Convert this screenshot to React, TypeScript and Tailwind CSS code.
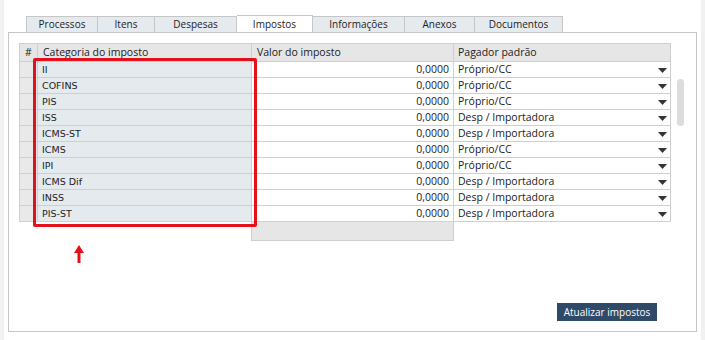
import React from 'react';

type Row = { categoria: string; valor: string; pagador: string };

const TABS = ['Processos', 'Itens', 'Despesas', 'Impostos', 'Informações', 'Anexos', 'Documentos'];
const TAB_WIDTHS = ['w-[72px]', 'w-[57px]', 'w-[82px]', 'w-[76px]', 'w-[92px]', 'w-[70px]', 'w-[88px]'];

const ROWS: Row[] = [
  { categoria: 'II', valor: '0,0000', pagador: 'Próprio/CC' },
  { categoria: 'COFINS', valor: '0,0000', pagador: 'Próprio/CC' },
  { categoria: 'PIS', valor: '0,0000', pagador: 'Próprio/CC' },
  { categoria: 'ISS', valor: '0,0000', pagador: 'Desp / Importadora' },
  { categoria: 'ICMS-ST', valor: '0,0000', pagador: 'Desp / Importadora' },
  { categoria: 'ICMS', valor: '0,0000', pagador: 'Próprio/CC' },
  { categoria: 'IPI', valor: '0,0000', pagador: 'Próprio/CC' },
  { categoria: 'ICMS Dif', valor: '0,0000', pagador: 'Desp / Importadora' },
  { categoria: 'INSS', valor: '0,0000', pagador: 'Desp / Importadora' },
  { categoria: 'PIS-ST', valor: '0,0000', pagador: 'Desp / Importadora' },
];

const ui = "font-['Open_Sans',sans-serif]";

export default function App() {
  return (
    <div className={`w-[705px] h-[340px] bg-white flex text-[#222] ${ui}`}>
      <div className="w-[4px] bg-[#f1f1f1]" />
      <div className="flex-1 pt-[16px] px-[4px]">
        {/* Tabs */}
        <div className="flex pl-[18px] h-[16px]">
          {TABS.map((t, i) => (
            <div
              key={t}
              className={`${TAB_WIDTHS[i]} flex items-center justify-center text-[10px] border-t border-r border-[#c6c6c6] ${
                i === 0 ? 'border-l' : ''
              } ${t === 'Impostos' ? 'bg-white h-[17px] -mt-[1px] relative z-10' : 'bg-[#e5eaef]'}`}
            >
              {t}
            </div>
          ))}
        </div>

        {/* Panel */}
        <div className="relative h-[300px] border border-[#c6c6c6] flex flex-col">
          <div className="flex-1 flex items-start pt-[10px] pl-[10px]">
            <div className="text-[10.5px]">
              {/* Header */}
              <div className="flex h-[19px] bg-[#e6e6e6] border border-[#cfcfcf]">
                <div className="w-[18px] border-r border-[#cfcfcf] flex items-center justify-center">#</div>
                <div className="w-[214px] border-r border-[#cfcfcf] flex items-center pl-[5px]">Categoria do imposto</div>
                <div className="w-[202px] border-r border-[#cfcfcf] flex items-center pl-[5px]">Valor do imposto</div>
                <div className="w-[216px] flex items-center pl-[4px]">Pagador padrão</div>
              </div>
              {ROWS.map(r => (
                <div key={r.categoria} className="flex h-[16px] border-x border-b border-[#cfcfcf]">
                  <div className="w-[18px] bg-[#e9e9e9] border-r border-[#cfcfcf]" />
                  <div className="w-[214px] bg-[#e5eaef] border-r border-[#cfcfcf] flex items-center pl-[4px] pt-[1px] font-['DejaVu_Sans',sans-serif] text-[9.5px]">
                    {r.categoria}
                  </div>
                  <div className="w-[202px] bg-white border-r border-[#cfcfcf] flex items-center justify-end pr-[4px] pt-[1px]">
                    {r.valor}
                  </div>
                  <div className="w-[216px] bg-white flex items-center justify-between pl-[4px] pr-[3px] pt-[1px]">
                    <span>{r.pagador}</span>
                    <svg width="9" height="5" viewBox="0 0 9 5">
                      <path d="M0 0h9L4.5 5z" fill="#333" />
                    </svg>
                  </div>
                </div>
              ))}
              {/* Footer sum cell */}
              <div className="flex h-[19px]">
                <div className="w-[232px]" />
                <div className="w-[203px] bg-[#e6e6e6] border-x border-b border-[#cfcfcf]" />
              </div>
            </div>
            {/* Scrollbar */}
            <div className="ml-[6px] mt-[36px] w-[7px] h-[47px] rounded-full bg-[#dcdcdc]" />
          </div>

          <div className="flex justify-end pr-[39px] pb-[10px]">
            <button className="w-[100px] h-[18px] bg-[#2e4a68] text-white text-[10px] flex items-center justify-center">
              Atualizar impostos
            </button>
          </div>

          {/* Red highlight */}
          <div className="absolute left-[24px] top-[25px] w-[224px] h-[169px] border-[3px] border-[#e3111b] rounded-[2px]" />
          <svg className="absolute left-[65px] top-[212px]" width="10" height="18" viewBox="0 0 10 18">
            <path d="M5 0L10 8H6.5V18H3.5V8H0Z" fill="#e3111b" />
          </svg>
        </div>
      </div>
      <div className="w-[4px] bg-[#f1f1f1]" />
    </div>
  );
}
